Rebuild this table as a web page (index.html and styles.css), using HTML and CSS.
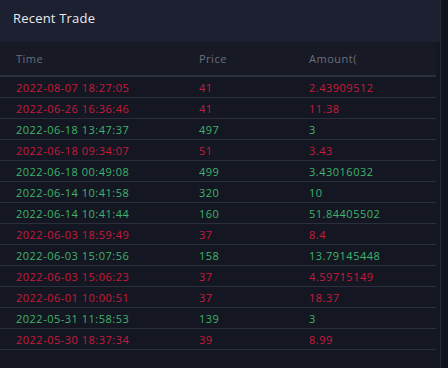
FILE: index.html
```html
<!DOCTYPE html>
<html lang="en">
<head>
  <meta charset="UTF-8">
  <meta name="viewport" content="width=device-width, initial-scale=1">
  <title>Recent Trade</title>
  <link rel="stylesheet" href="styles.css">
</head>
<body>
  <div class="panel">
    <div class="panel-head">Recent Trade</div>
    <div class="trades">
      <div class="row head">
        <span>Time</span><span>Price</span><span>Amount(</span>
      </div>
      <div class="row sell"><span>2022-08-07 18:27:05</span><span>41</span><span>2.43909512</span></div>
      <div class="row sell"><span>2022-06-26 16:36:46</span><span>41</span><span>11.38</span></div>
      <div class="row buy"><span>2022-06-18 13:47:37</span><span>497</span><span>3</span></div>
      <div class="row sell"><span>2022-06-18 09:34:07</span><span>51</span><span>3.43</span></div>
      <div class="row buy"><span>2022-06-18 00:49:08</span><span>499</span><span>3.43016032</span></div>
      <div class="row buy"><span>2022-06-14 10:41:58</span><span>320</span><span>10</span></div>
      <div class="row buy"><span>2022-06-14 10:41:44</span><span>160</span><span>51.84405502</span></div>
      <div class="row sell"><span>2022-06-03 18:59:49</span><span>37</span><span>8.4</span></div>
      <div class="row buy"><span>2022-06-03 15:07:56</span><span>158</span><span>13.79145448</span></div>
      <div class="row sell"><span>2022-06-03 15:06:23</span><span>37</span><span>4.59715149</span></div>
      <div class="row sell"><span>2022-06-01 10:00:51</span><span>37</span><span>18.37</span></div>
      <div class="row buy"><span>2022-05-31 11:58:53</span><span>139</span><span>3</span></div>
      <div class="row sell"><span>2022-05-30 18:37:34</span><span>39</span><span>8.99</span></div>
    </div>
  </div>
</body>
</html>
```

FILE: styles.css
```css
:root {
  --page-bg: #10131b;
  --panel-bg: #141722;
  --head-bg: #1c2030;
  --thead-bg: #171a25;
  --line: #2b2f3b;
  --muted: #6a6f7d;
  --red: #c71a3c;
  --green: #3fb46b;
}

body {
  margin: 0;
  background-color: var(--page-bg);
  font-family: 'Open Sans', sans-serif;
}

.panel {
  width: 441px;
  height: 368px;
  background-color: var(--panel-bg);
  border-right: 1px solid #262a36;
  box-sizing: border-box;
}

.panel-head {
  height: 42px;
  display: flex;
  align-items: center;
  padding-left: 13px;
  padding-bottom: 6px;
  box-sizing: border-box;
  background-color: var(--head-bg);
  color: #e9eaef;
  font-size: 13px;
  letter-spacing: 0.2px;
}

.trades {
  width: 436px;
}

.row {
  display: grid;
  grid-template-columns: 183px 110px 1fr;
  align-items: center;
  height: 21px;
  padding-left: 16px;
  border-bottom: 1px solid var(--line);
  box-sizing: border-box;
  font-size: 11px;
  letter-spacing: 0.5px;
}

.row.head {
  height: 35px;
  background-color: var(--thead-bg);
  border-bottom: 2px solid var(--line);
  color: var(--muted);
}

.sell {
  color: var(--red);
}

.buy {
  color: var(--green);
}
```
